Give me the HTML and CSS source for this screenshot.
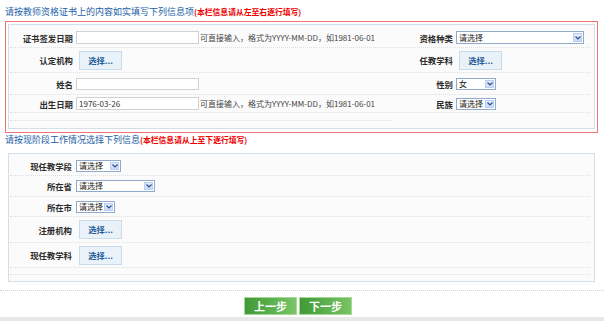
FILE: index.html
```html
<!DOCTYPE html>
<html lang="zh-CN">
<head>
    <meta charset="UTF-8">
    <title>教师资格信息填写</title>
    <link rel="stylesheet" href="styles.css">
</head>
<body>
    <div class="page">
        <h3 class="secTitle">请按教师资格证书上的内容如实填写下列信息项<span class="note">(本栏信息请从左至右逐行填写)</span></h3>

        <div class="redBox">
            <div class="panel top">
                <div class="row r1">
                    <div class="lbl">证书签发日期</div>
                    <div class="fld"><input class="txt" type="text"><span class="hint">可直接输入，格式为YYYY-MM-DD，如1981-06-01</span></div>
                    <div class="lbl">资格种类</div>
                    <div class="fld">
                        <div class="sel w128"><span>请选择</span><i><svg width="6" height="4" viewBox="0 0 6 4"><path d="M0.5 0.5 L3 3 L5.5 0.5" fill="none" stroke="#2a4f8f" stroke-width="1.2"/></svg></i></div>
                    </div>
                </div>
                <div class="row r2">
                    <div class="lbl">认定机构</div>
                    <div class="fld"><button class="pick" type="button">选择...</button></div>
                    <div class="lbl">任教学科</div>
                    <div class="fld"><button class="pick" type="button">选择...</button></div>
                </div>
                <div class="row r3">
                    <div class="lbl">姓名</div>
                    <div class="fld"><input class="txt short" type="text"></div>
                    <div class="lbl">性别</div>
                    <div class="fld">
                        <div class="sel w40"><span>女</span><i><svg width="6" height="4" viewBox="0 0 6 4"><path d="M0.5 0.5 L3 3 L5.5 0.5" fill="none" stroke="#2a4f8f" stroke-width="1.2"/></svg></i></div>
                    </div>
                </div>
                <div class="row r4">
                    <div class="lbl">出生日期</div>
                    <div class="fld"><input class="txt" type="text" value="1976-03-26"><span class="hint">可直接输入，格式为YYYY-MM-DD，如1981-06-01</span></div>
                    <div class="lbl">民族</div>
                    <div class="fld">
                        <div class="sel w40"><span>请选择</span><i><svg width="6" height="4" viewBox="0 0 6 4"><path d="M0.5 0.5 L3 3 L5.5 0.5" fill="none" stroke="#2a4f8f" stroke-width="1.2"/></svg></i></div>
                    </div>
                </div>
                <div class="row r5 half"></div>
            </div>
        </div>

        <h3 class="secTitle second">请按现阶段工作情况选择下列信息<span class="note">(本栏信息请从上至下逐行填写)</span></h3>

        <div class="panel bottom">
            <div class="row b1">
                <div class="lbl">现任教学段</div>
                <div class="fld"><div class="sel w45"><span>请选择</span><i><svg width="6" height="4" viewBox="0 0 6 4"><path d="M0.5 0.5 L3 3 L5.5 0.5" fill="none" stroke="#2a4f8f" stroke-width="1.2"/></svg></i></div></div>
            </div>
            <div class="row b2">
                <div class="lbl">所在省</div>
                <div class="fld"><div class="sel w79"><span>请选择</span><i><svg width="6" height="4" viewBox="0 0 6 4"><path d="M0.5 0.5 L3 3 L5.5 0.5" fill="none" stroke="#2a4f8f" stroke-width="1.2"/></svg></i></div></div>
            </div>
            <div class="row b3">
                <div class="lbl">所在市</div>
                <div class="fld"><div class="sel w39"><span>请选择</span><i><svg width="6" height="4" viewBox="0 0 6 4"><path d="M0.5 0.5 L3 3 L5.5 0.5" fill="none" stroke="#2a4f8f" stroke-width="1.2"/></svg></i></div></div>
            </div>
            <div class="row b4">
                <div class="lbl">注册机构</div>
                <div class="fld"><button class="pick" type="button">选择...</button></div>
            </div>
            <div class="row b5">
                <div class="lbl">现任教学科</div>
                <div class="fld"><button class="pick" type="button">选择...</button></div>
            </div>
            <div class="row b6"></div>
        </div>
    </div>

    <div class="actions">
        <button class="stepBtn" type="button">上一步</button>
        <button class="stepBtn" type="button">下一步</button>
    </div>
    <div class="footStrip"></div>
</body>
</html>
```

FILE: styles.css
```css
body {
    margin: 0;
    font-family: "Noto Sans CJK SC", "DejaVu Sans", sans-serif;
    color: #333;
    background: #fff;
    width: 604px;
    height: 321px;
    overflow: hidden;
}

.page {
    padding-left: 5px;
}

.secTitle {
    margin: 5px 0 2px 0;
    height: 14px;
    line-height: 14px;
    font-size: 9px;
    font-weight: normal;
    color: #1a60a8;
    white-space: nowrap;
}

.secTitle.second {
    margin: 0 0 6px 0;
}

.note {
    font-size: 7.8px;
    font-weight: bold;
    color: #ee0000;
}

.redBox {
    width: 593px;
    box-sizing: border-box;
    border: 1px solid #f37474;
    padding: 2px 2px 3px 2px;
}

.panel {
    width: 587px;
    box-sizing: border-box;
    border: 1px solid #d3e0ec;
    background: #fbfbfb;
}

.panel.top {
    padding: 3px 4px 7px 1px;
}

.panel.bottom {
    margin-left: 3px;
    padding: 3px 4px 6px 1px;
}

.row {
    display: grid;
    grid-template-columns: 66px 316px 64px 1fr;
    align-items: center;
    box-sizing: border-box;
    border-bottom: 1px dotted #e0e0e0;
}

.panel.bottom .row {
    grid-template-columns: 66px 1fr;
}

.r1 { height: 20px; }
.r2 { height: 25px; }
.r3 { height: 22px; }
.r4 { height: 18px; }
.r5 { height: 8px; }
.half { width: 382px; }

.b1 { height: 19px; }
.b2 { height: 21px; }
.b3 { height: 20px; }
.b4 { height: 26px; }
.b5 { height: 25px; }
.b6 { height: 7px; }

.lbl {
    text-align: right;
    padding-right: 3px;
    font-size: 8.4px;
    font-weight: bold;
    color: #2b2b2b;
    white-space: nowrap;
}

.panel.bottom .lbl {
    padding-right: 4px;
}

.fld {
    display: flex;
    align-items: center;
    white-space: nowrap;
}

.txt {
    width: 123px;
    height: 13px;
    box-sizing: border-box;
    border: 1px solid #d2d2d2;
    background: #fff;
    padding: 0 2px;
    margin: 0;
    font-family: "Noto Sans CJK SC", "DejaVu Sans", sans-serif;
    font-size: 8px;
    color: #333;
    outline: none;
}

.txt.short {
    height: 12px;
}

.hint {
    margin-left: 1px;
    font-size: 8px;
    color: #444;
}

.pick {
    margin: 0 0 0 3px;
    width: 43px;
    height: 19px;
    box-sizing: border-box;
    border: 1px solid #cadbec;
    background: #e9f1f9;
    font-family: "Noto Sans CJK SC", "DejaVu Sans", sans-serif;
    font-size: 8.3px;
    font-weight: bold;
    color: #1f5c9a;
    padding: 0;
    line-height: 17px;
}

.sel {
    display: flex;
    align-items: stretch;
    height: 12px;
    box-sizing: border-box;
    border: 1px solid #8faacd;
    background: #fff;
    font-size: 8px;
    color: #222;
}

.sel span {
    flex: 1;
    padding-left: 2px;
    line-height: 10px;
    overflow: hidden;
}

.sel i {
    width: 9px;
    margin: 1px 1px 1px 0;
    background: linear-gradient(#e4edfc, #c9dafa);
    border: 1px solid #b9cdf0;
    box-sizing: border-box;
    display: flex;
    align-items: center;
    justify-content: center;
}

.w128 { width: 128px; height: 13px; }
.w128 span { line-height: 11px; }
.w40 { width: 40px; }
.w45 { width: 45px; }
.w79 { width: 79px; }
.w39 { width: 39px; }

.actions {
    margin-top: 8px;
    border-top: 1px dotted #cfcfcf;
    padding: 6px 8px 0 0;
    display: flex;
    justify-content: center;
    gap: 2px;
}

.stepBtn {
    width: 53px;
    height: 18px;
    box-sizing: border-box;
    border: 1px solid #a5d996;
    background: linear-gradient(to right, #3f9a35, #78c466);
    color: #fff;
    font-family: "Noto Sans CJK SC", "DejaVu Sans", sans-serif;
    font-size: 11px;
    font-weight: bold;
    padding: 0;
    line-height: 16px;
}

.footStrip {
    margin-top: 2px;
    height: 6px;
    background: #e8e8e8;
}
```
